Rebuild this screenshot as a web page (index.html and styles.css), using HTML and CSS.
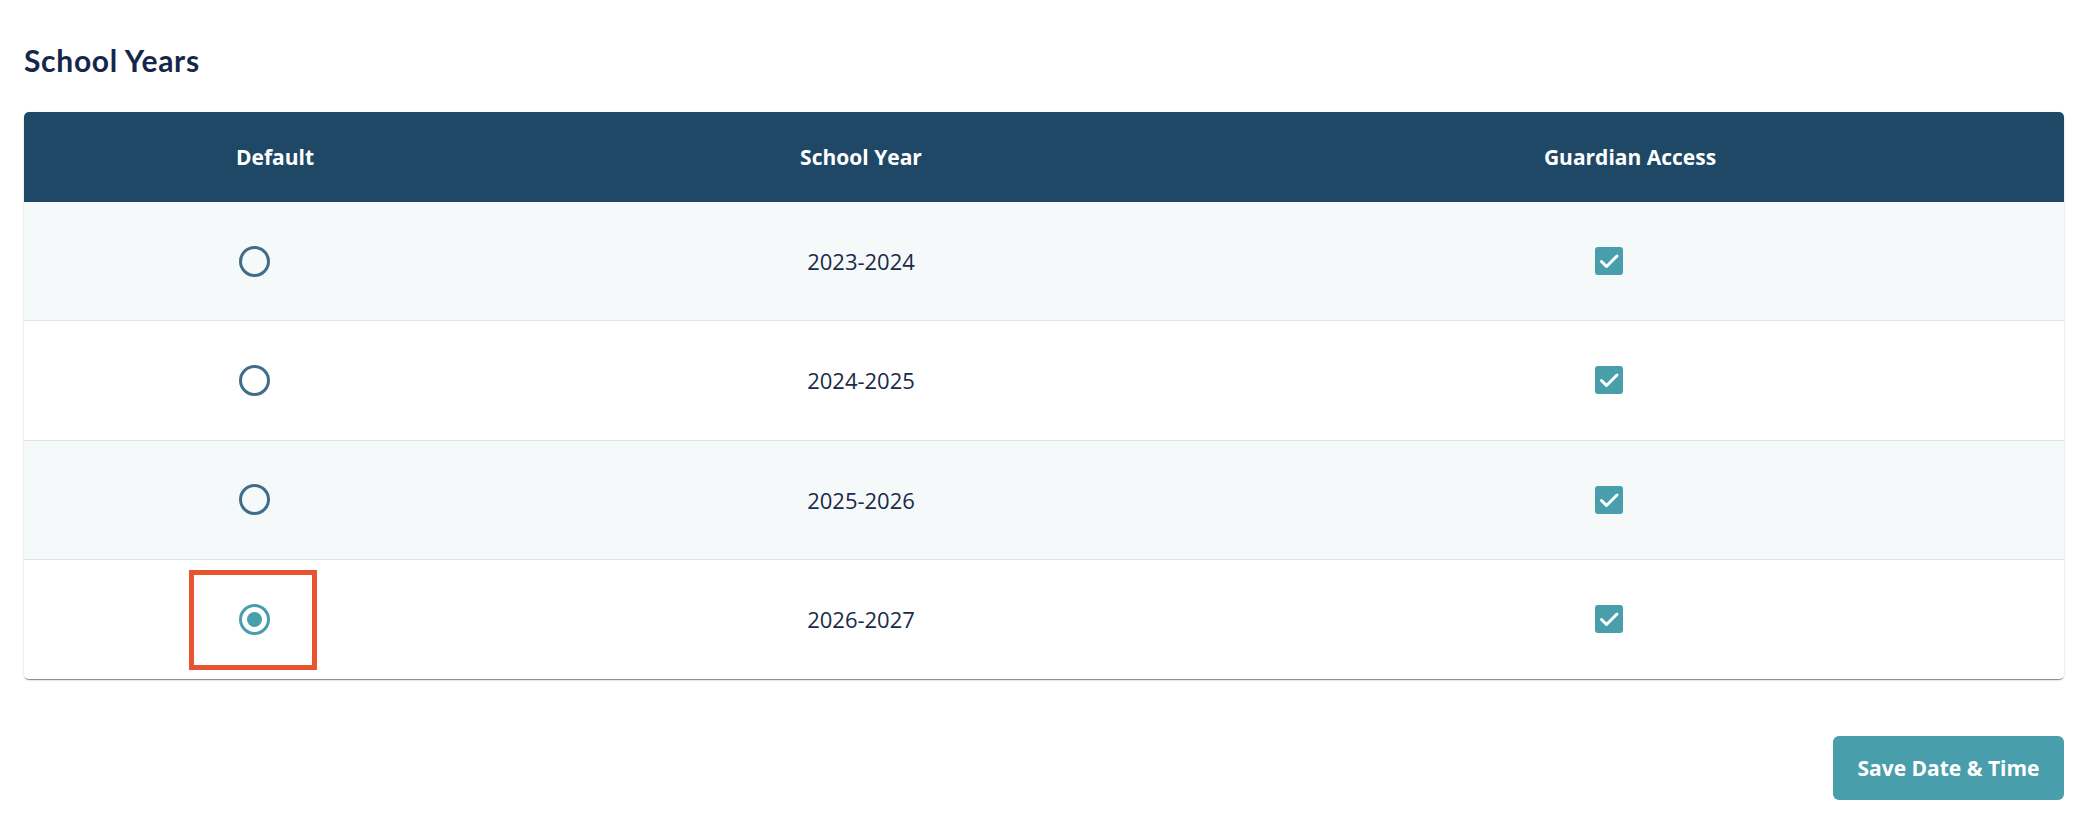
FILE: index.html
```html
<!DOCTYPE html>
<html lang="en">
<head>
<meta charset="utf-8">
<title>School Years</title>
<link rel="stylesheet" href="styles.css">
</head>
<body>
<main class="page">
  <h1 class="title">School Years</h1>
  <section class="table">
    <div class="row head">
      <div class="cell">Default</div>
      <div class="cell">School Year</div>
      <div class="cell">Guardian Access</div>
    </div>
    <div class="row odd">
      <div class="cell"><span class="radio"></span></div>
      <div class="cell">2023-2024</div>
      <div class="cell"><span class="check"><svg viewBox="0 0 28 28" width="28" height="28"><rect width="28" height="28" rx="3" fill="#489fab"/><polyline points="6.5,14.5 11.5,19.5 22,9" fill="none" stroke="#fff" stroke-width="3" stroke-linecap="round" stroke-linejoin="round"/></svg></span></div>
    </div>
    <div class="row">
      <div class="cell"><span class="radio"></span></div>
      <div class="cell">2024-2025</div>
      <div class="cell"><span class="check"><svg viewBox="0 0 28 28" width="28" height="28"><rect width="28" height="28" rx="3" fill="#489fab"/><polyline points="6.5,14.5 11.5,19.5 22,9" fill="none" stroke="#fff" stroke-width="3" stroke-linecap="round" stroke-linejoin="round"/></svg></span></div>
    </div>
    <div class="row odd">
      <div class="cell"><span class="radio"></span></div>
      <div class="cell">2025-2026</div>
      <div class="cell"><span class="check"><svg viewBox="0 0 28 28" width="28" height="28"><rect width="28" height="28" rx="3" fill="#489fab"/><polyline points="6.5,14.5 11.5,19.5 22,9" fill="none" stroke="#fff" stroke-width="3" stroke-linecap="round" stroke-linejoin="round"/></svg></span></div>
    </div>
    <div class="row last">
      <div class="cell"><span class="radio selected highlight"></span></div>
      <div class="cell">2026-2027</div>
      <div class="cell"><span class="check"><svg viewBox="0 0 28 28" width="28" height="28"><rect width="28" height="28" rx="3" fill="#489fab"/><polyline points="6.5,14.5 11.5,19.5 22,9" fill="none" stroke="#fff" stroke-width="3" stroke-linecap="round" stroke-linejoin="round"/></svg></span></div>
    </div>
  </section>
  <div class="actions">
    <button class="save" type="button">Save Date &amp; Time</button>
  </div>
</main>
</body>
</html>
```

FILE: styles.css
```css
html, body {
  margin: 0;
  padding: 0;
  background: #ffffff;
}

.page {
  padding: 42px 36px 0 24px;
  font-family: "Open Sans", "Liberation Sans", sans-serif;
  color: #1b2a4a;
}

.title {
  margin: 0;
  font-family: Lato, "Open Sans", sans-serif;
  font-weight: 700;
  font-size: 30px;
  line-height: 36px;
  letter-spacing: 0.7px;
  color: #15264b;
}

.table {
  margin-top: 34px;
  border-radius: 5px;
  overflow: hidden;
  box-shadow: 0 2px 1px -1px rgba(0,0,0,0.3), 0 1px 1px 0 rgba(0,0,0,0.16), 0 1px 3px 0 rgba(0,0,0,0.12);
}

.row {
  display: grid;
  grid-template-columns: 502px 670px 1fr;
  height: 119.3px;
  box-sizing: border-box;
  border-bottom: 1px solid #e0e3e5;
  background: #ffffff;
}

.row.odd {
  background: #f5f9fa;
}

.row.last {
  border-bottom: none;
  height: 119px;
}

.row.head {
  height: 90px;
  border-bottom: none;
  background: #1f4866;
  color: #ffffff;
  font-weight: 700;
}

.cell {
  display: flex;
  align-items: center;
  justify-content: center;
  font-size: 22px;
}

.row.head .cell {
  font-size: 21px;
}

.radio {
  position: relative;
  width: 31px;
  height: 31px;
  box-sizing: border-box;
  border: 3px solid #3f6d8a;
  border-radius: 50%;
  margin-right: 42px;
}

.radio.selected {
  border-color: #489fab;
}

.radio.selected::before {
  content: "";
  position: absolute;
  left: 5px;
  top: 5px;
  width: 15px;
  height: 15px;
  border-radius: 50%;
  background: #489fab;
}

.radio.highlight::after {
  content: "";
  position: absolute;
  left: -53px;
  top: -37px;
  width: 118px;
  height: 90px;
  border: 5px solid #e9542f;
}

.check {
  display: block;
  width: 28px;
  height: 28px;
  margin-right: 42px;
}

.check svg {
  display: block;
}

.actions {
  display: flex;
  justify-content: flex-end;
  margin-top: 57px;
}

.save {
  width: 231px;
  height: 64px;
  border: none;
  border-radius: 6px;
  background: #489fab;
  color: #ffffff;
  font-family: "Open Sans", "Liberation Sans", sans-serif;
  font-weight: 700;
  font-size: 21px;
  padding: 0;
  cursor: pointer;
}
```
